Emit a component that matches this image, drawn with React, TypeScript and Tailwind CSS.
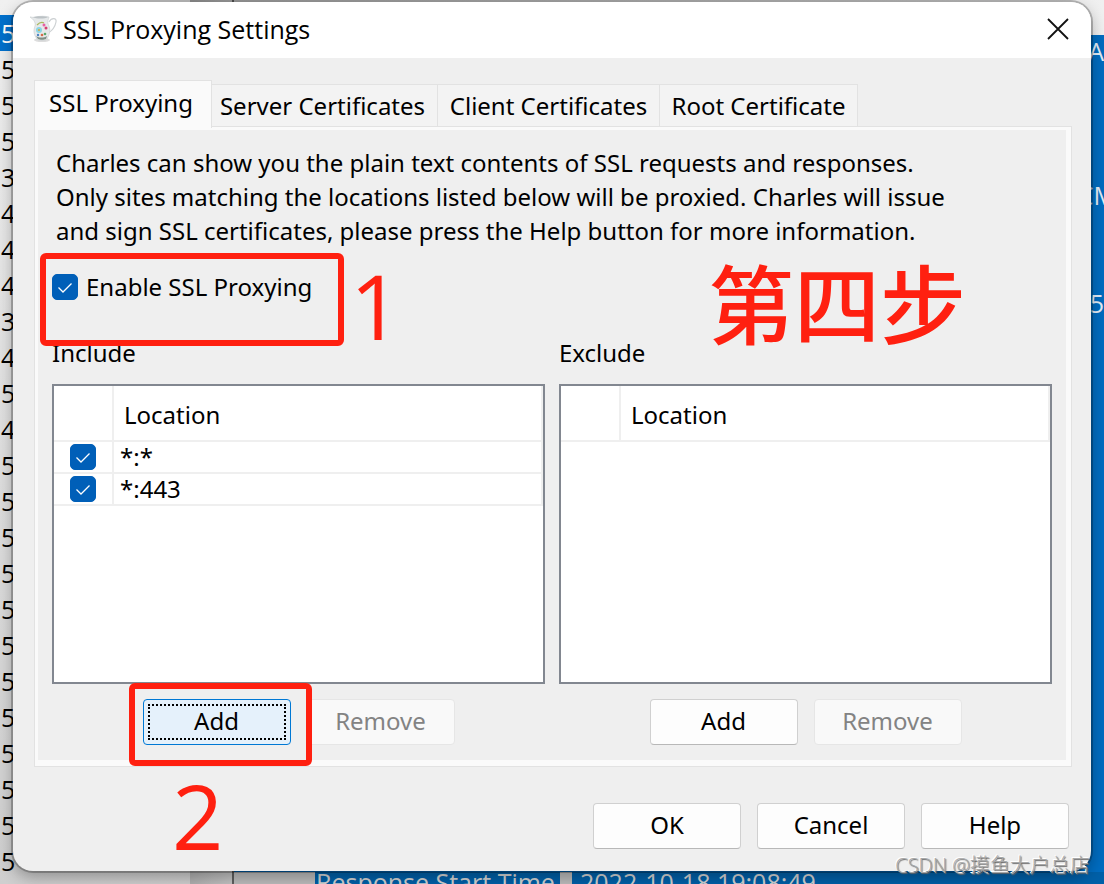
import { useId, useState } from 'react';
import type { ReactNode } from 'react';

const ROW_DIGITS = ['5', '5', '5', '5', '3', '4', '4', '4', '3', '4', '5', '4', '5', '5', '5', '5', '5', '5', '5', '5', '5', '5', '5', '5'];

const TABS = ['SSL Proxying', 'Server Certificates', 'Client Certificates', 'Root Certificate'];

interface Location {
  pattern: string;
  enabled: boolean;
}

export default function App() {
  return (
    <div className="relative min-h-screen overflow-hidden bg-[#c4c4c4] pt-[2px] pr-[13px] pb-3 pl-[13px] font-['Noto_Sans','Noto_Sans_CJK_SC',sans-serif] text-2xl leading-9 text-black">
      <SessionWindow />
      <SettingsDialog />
      <p className="absolute right-[14px] bottom-1 font-['Open_Sans','Noto_Sans_CJK_SC',sans-serif] text-xl leading-7 font-light whitespace-nowrap text-[#a8a8a8] [text-shadow:1px_1px_1px_#666,-1px_-1px_0_#fff]">
        CSDN @摸鱼大户总店
      </p>
    </div>
  );
}

// The main Charles window, seen around the edges of the dialog
function SessionWindow() {
  return (
    <div className="absolute inset-0 flex font-['Open_Sans',sans-serif] text-[25px]">
      <div className="w-[190px] bg-linear-to-b from-[#f0f0f0] to-[#cfcfcf] pt-[15px]">
        {ROW_DIGITS.map((digit, i) => (
          <div key={i} className={i === 0 ? 'h-9 bg-[#0070cc] pl-px leading-9 text-white' : 'h-9 pl-px leading-9'}>{digit}</div>
        ))}
      </div>
      <div className="w-11 border-r-2 border-[#606060] bg-linear-to-r from-[#b0b0b0] to-[#c4c4c4]" />
      <div className="flex flex-1 flex-col justify-between">
        <div className="h-[35px] bg-linear-to-r from-[#c0c0c0] to-[#f0f0f0]" />
        <div className="flex flex-1 flex-col items-end overflow-hidden bg-[#006cc0] text-[#e4eef8]">
          <span className="leading-8">1A</span>
          <span className="mt-28 -mr-3 leading-8">CM</span>
          <span className="mt-[76px] leading-8">25</span>
        </div>
        <div className="flex h-3 overflow-hidden text-[#d4d4d4]">
          <div className="w-[81px] bg-[#bdbdbd]" />
          <div className="w-[245px] bg-[#0060a8] pl-px leading-5 whitespace-nowrap">Response Start Time</div>
          <div className="w-3 bg-[#bdbdbd]" />
          <div className="flex-1 bg-[#0060a8] pl-2 leading-5 whitespace-nowrap">2022-10-18 19:08:49</div>
        </div>
      </div>
    </div>
  );
}

function SettingsDialog() {
  const [tab, setTab] = useState(0);
  const [enabled, setEnabled] = useState(true);

  return (
    <section aria-label="SSL Proxying Settings" className="relative rounded-[20px] bg-[#efefef] shadow-[0_0_0_2px_#0000003c,0_6px_16px_#00000050]">
      <header className="flex h-14 items-center rounded-t-[20px] bg-white pr-[22px] pb-[2px] pl-4">
        <JugIcon />
        <h1 className="ml-1 flex-1 font-['Open_Sans',sans-serif] text-[25px]">SSL Proxying Settings</h1>
        <button type="button" aria-label="Close">
          <svg width="22" height="22" viewBox="0 0 22 22" fill="none" stroke="#111" strokeWidth="1.8">
            <path d="M1 1l20 20M21 1L1 21" />
          </svg>
        </button>
      </header>

      <div className="pt-[22px] pr-[19px] pl-[21px]">
        <div role="tablist" className="flex items-end">
          {TABS.map((label, i) => (
            <button
              key={label}
              type="button"
              role="tab"
              aria-selected={tab === i}
              onClick={() => setTab(i)}
              className={
                tab === i
                  ? 'relative -mb-[2px] h-12 w-[178px] border border-b-0 border-[#e2e2e2] bg-[#fafafa] pr-1 pb-1 whitespace-nowrap'
                  : 'h-[42px] border-t border-r border-[#e2e2e2] bg-[#f3f3f3] whitespace-nowrap ' + ['w-[178px]', 'w-[226px] pr-1', 'w-[222px]', 'w-[198px]'][i]
              }
            >
              {label}
            </button>
          ))}
        </div>

        <div role="tabpanel" className="border border-[#e2e2e2] bg-[#fafafa] pt-[3px] pr-[5px] pb-[6px] pl-[3px]">
          <div className="bg-[#efefef] px-[14px] pt-4 pb-[15px]">
            <p className="pl-1 leading-[34px]">
              Charles can show you the plain text contents of SSL requests and responses.<br />
              Only sites matching the locations listed below will be proxied. Charles will issue<br />
              and sign SSL certificates, please press the Help button for more information.
            </p>
            <div className="relative mt-[21px] h-[66px]">
              <label className="flex w-fit items-center gap-2 leading-9">
                <CheckBox checked={enabled} onChange={setEnabled} />
                Enable SSL Proxying
              </label>
              <div className="absolute -top-4 -left-3 z-10 h-[93px] w-[304px] rounded-md border-6 border-[#ff2010]" />
              <Mark className="-top-6 left-[298px] text-[90px]">1</Mark>
              <Mark className="-top-6 left-[656px] text-[86px]">第四步</Mark>
            </div>
            <div className="flex gap-[14px]">
              <LocationList title="Include" highlighted initial={[{ pattern: '*:*', enabled: true }, { pattern: '*:443', enabled: true }]} />
              <LocationList title="Exclude" initial={[]} />
            </div>
          </div>
        </div>
      </div>

      <footer className="relative flex justify-end gap-4 pt-9 pr-[22px] pb-[22px]">
        <Mark className="-top-3 left-[159px] text-[90px]">2</Mark>
        <PushButton>OK</PushButton>
        <PushButton>Cancel</PushButton>
        <PushButton>Help</PushButton>
      </footer>
    </section>
  );
}

function LocationList({ title, initial, highlighted = false }: { title: string; initial: Location[]; highlighted?: boolean }) {
  const [locations, setLocations] = useState(initial);
  const headingId = useId();

  function toggle(index: number, enabled: boolean) {
    setLocations(locations.map((loc, i) => (i === index ? { ...loc, enabled } : loc)));
  }

  return (
    <div className="flex-1">
      <h2 id={headingId} className="leading-9">{title}</h2>
      <div className="mt-[13px] h-[300px] border-2 border-[#828790] bg-white">
        <table aria-labelledby={headingId} className="w-full table-fixed border-separate border-spacing-0 text-left">
          <thead>
            <tr className="h-14">
              <th className="w-[60px] border-r-2 border-b-2 border-[#efefef]" />
              <th className="border-r-2 border-b-2 border-[#efefef] pt-[3px] pl-[10px] font-normal">Location</th>
            </tr>
          </thead>
          <tbody>
            {locations.map((loc, i) => (
              <tr key={loc.pattern} className="h-8">
                <td className="border-r-2 border-b-2 border-[#efefef] p-0 pl-4">
                  <CheckBox label={`Enable ${loc.pattern}`} checked={loc.enabled} onChange={(value) => toggle(i, value)} />
                </td>
                <td className="border-r-2 border-b-2 border-[#efefef] p-0 pl-[6px] leading-[30px]">{loc.pattern}</td>
              </tr>
            ))}
          </tbody>
        </table>
      </div>
      <div className="mt-[15px] flex justify-center gap-4">
        <div className="relative">
          <PushButton focused={highlighted}>Add</PushButton>
          {highlighted && <div className="absolute -top-4 -left-[14px] z-10 h-[83px] w-[183px] rounded-md border-6 border-[#ff2010]" />}
        </div>
        <PushButton disabled>Remove</PushButton>
      </div>
    </div>
  );
}

function CheckBox({ checked, onChange, label }: { checked: boolean; onChange: (value: boolean) => void; label?: string }) {
  return (
    <span className="grid size-[26px]">
      <input
        type="checkbox"
        aria-label={label}
        checked={checked}
        onChange={(e) => onChange(e.target.checked)}
        className="peer col-start-1 row-start-1 size-[26px] appearance-none rounded-[5px] border border-[#888] bg-white checked:border-[#005fb8] checked:bg-[#005fb8]"
      />
      <svg className="pointer-events-none invisible col-start-1 row-start-1 peer-checked:visible" viewBox="0 0 26 26" fill="none" stroke="#fff" strokeWidth="1.3">
        <path d="M6.5 13.5l4.5 4.5 8.5-8.5" />
      </svg>
    </span>
  );
}

function PushButton({ children, disabled = false, focused = false }: { children: ReactNode; disabled?: boolean; focused?: boolean }) {
  if (focused) {
    return (
      <button type="button" className="block h-[46px] w-[148px] rounded border border-[#0078d4] bg-[#e5f1fb] p-1">
        <span className="flex h-full items-center justify-center border-2 border-dotted border-black pb-[2px]">{children}</span>
      </button>
    );
  }
  return (
    <button
      type="button"
      disabled={disabled}
      className="block h-[46px] w-[148px] rounded border border-[#d0d0d0] border-b-[#b8b8b8] bg-[#fdfdfd] pb-[2px] disabled:border-[#e6e6e6] disabled:bg-[#f9f9f9] disabled:text-[#838383]"
    >
      {children}
    </button>
  );
}

// Red hand-placed marks that number the steps
function Mark({ children, className }: { children: ReactNode; className: string }) {
  return (
    <span className={`pointer-events-none absolute z-10 font-['Open_Sans','Noto_Sans_CJK_SC',sans-serif] leading-[120px] font-medium whitespace-nowrap text-[#ff2010] ${className}`}>
      {children}
    </span>
  );
}

function JugIcon() {
  return (
    <svg width="30" height="30" viewBox="0 0 30 30" fill="none" aria-hidden="true">
      <ellipse cx="13" cy="26" rx="8" ry="2" fill="#ddd" />
      <path d="M20 8c2-4 8-5 7 0-1 5-4 9-8 11" stroke="#cdd1d3" strokeWidth="1.2" />
      <path d="M1 3c2 0 4 1 6 0 4-1 9-1 13 0-1 4-2 5 0 9 2 5 0 9-2 13-2 2-8 2-10 0-3-4-4-8-2-13 1-4-2-7-5-9z" fill="#e6e9ea" stroke="#c8cccf" strokeWidth=".6" />
      <path d="M4 3c4-1 11-1 15 0-3 2-12 2-15 0z" fill="#bcc2c5" />
      <path d="M7 22c3 2 8 2 11 0l-1 3c-2 1-6 1-8 0z" fill="#7f8f86" />
      <circle cx="10" cy="16" r="3" fill="#8cd6e4" />
      <circle cx="10" cy="16" r="1" fill="#d9a63c" />
      <path d="M8 11c2-2 5-3 7-2" stroke="#a9b85c" strokeWidth="1.2" />
      <circle cx="15" cy="11" r="1.5" fill="#e85fa5" />
      <circle cx="17" cy="14" r="1.5" fill="#d63c70" />
      <circle cx="13" cy="21" r="1.3" fill="#d56a4a" />
      <circle cx="16" cy="20" r="1.3" fill="#58a86b" />
      <circle cx="9" cy="21" r="1.2" fill="#4d84c4" />
    </svg>
  );
}
